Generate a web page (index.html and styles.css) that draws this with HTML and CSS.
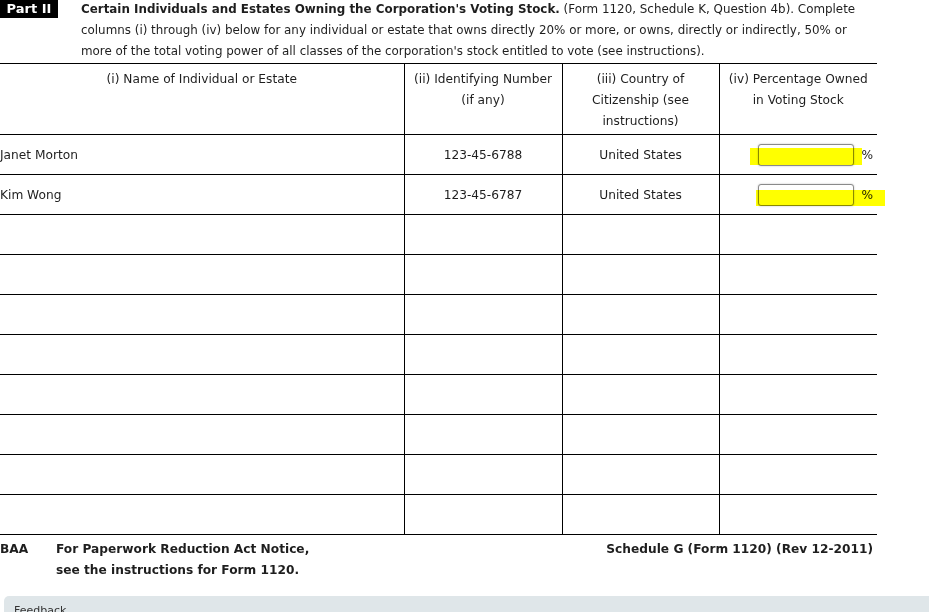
FILE: index.html
```html
<!DOCTYPE html>
<html>
<head>
<meta charset="utf-8">
<link rel="stylesheet" href="styles.css">
</head>
<body>
<div class="page">
  <div class="part-head">
    <div class="part-label">Part II</div>
    <p class="part-text"><b>Certain Individuals and Estates Owning the Corporation's Voting Stock.</b> (Form 1120, Schedule K, Question 4b). Complete<br>columns (i) through (iv) below for any individual or estate that owns directly 20% or more, or owns, directly or indirectly, 50% or<br>more of the total voting power of all classes of the corporation's stock entitled to vote (see instructions).</p>
  </div>
  <table class="grid">
    <colgroup>
      <col class="c1"><col class="c2"><col class="c3"><col class="c4">
    </colgroup>
    <thead>
      <tr class="hrow">
        <th>(i) Name of Individual or Estate</th>
        <th>(ii) Identifying Number<br>(if any)</th>
        <th>(iii) Country of<br>Citizenship (see<br>instructions)</th>
        <th>(iv) Percentage Owned<br>in Voting Stock</th>
      </tr>
    </thead>
    <tbody>
      <tr>
        <td class="name">Janet Morton</td>
        <td>123-45-6788</td>
        <td>United States</td>
        <td class="pct-cell"><div class="pct"><span class="mark mark1"></span><input class="pct-input" type="text"><span class="sign">%</span></div></td>
      </tr>
      <tr>
        <td class="name">Kim Wong</td>
        <td>123-45-6787</td>
        <td>United States</td>
        <td class="pct-cell"><div class="pct"><span class="mark mark2"></span><input class="pct-input" type="text"><span class="sign">%</span></div></td>
      </tr>
      <tr><td></td><td></td><td></td><td></td></tr>
      <tr><td></td><td></td><td></td><td></td></tr>
      <tr><td></td><td></td><td></td><td></td></tr>
      <tr><td></td><td></td><td></td><td></td></tr>
      <tr><td></td><td></td><td></td><td></td></tr>
      <tr><td></td><td></td><td></td><td></td></tr>
      <tr><td></td><td></td><td></td><td></td></tr>
      <tr><td></td><td></td><td></td><td></td></tr>
    </tbody>
  </table>
  <div class="foot">
    <div class="baa">BAA</div>
    <div class="notice">For Paperwork Reduction Act Notice,<br>see the instructions for Form 1120.</div>
    <div class="sched">Schedule G (Form 1120) (Rev 12-2011)</div>
  </div>
</div>
<div class="feedback"><span class="fb-text">Feedback</span></div>
</body>
</html>
```
FILE: styles.css
```css
html, body {
  margin: 0;
  padding: 0;
  background: #fff;
}
body {
  font-family: "DejaVu Sans", Verdana, sans-serif;
  font-size: 12.2px;
  color: #1e1e1e;
  width: 929px;
  height: 612px;
  overflow: hidden;
}
.page {
  width: 877px;
}
.part-head {
  display: flex;
  align-items: flex-start;
}
.part-label {
  background: #000;
  color: #fff;
  font-weight: bold;
  font-size: 13px;
  width: 58px;
  height: 18px;
  line-height: 18px;
  text-align: center;
  flex: none;
}
.part-text {
  margin: -1px 0 0 23px;
  line-height: 21px;
  flex: 1;
  font-size: 11.9px;
  white-space: nowrap;
}
.grid {
  border-collapse: collapse;
  table-layout: fixed;
  width: 877px;
  margin-top: 1px;
}
.c1 { width: 404px; }
.c2 { width: 158px; }
.c3 { width: 157px; }
.c4 { width: 158px; }
.grid th, .grid td {
  border-top: 1px solid #000;
  border-bottom: 1px solid #000;
  padding: 0;
  text-align: center;
}
.grid th + th, .grid td + td {
  border-left: 1px solid #000;
}
.grid th {
  font-weight: normal;
  vertical-align: top;
  line-height: 21px;
  height: 71px;
  padding-top: 5px;
  box-sizing: border-box;
}
.grid td {
  height: 39px;
  vertical-align: middle;
}
.grid td.name {
  text-align: left;
}
.pct-cell {
  text-align: left !important;
}
.pct {
  position: relative;
  display: flex;
  align-items: center;
  padding-left: 38px;
}
.pct-input {
  width: 96px;
  height: 22px;
  box-sizing: border-box;
  border: 1px solid #8a8a8a;
  border-radius: 3px;
  box-shadow: 0 0 2px rgba(0,0,0,0.25);
  background: #fff;
  margin: 0;
  padding: 0;
}
.sign {
  margin-left: 8px;
}
.mark {
  position: absolute;
  background: #ffff00;
  mix-blend-mode: multiply;
  z-index: 2;
  pointer-events: none;
}
.mark1 {
  left: 30px;
  top: 4px;
  width: 112px;
  height: 17px;
}
.mark2 {
  left: 36px;
  top: 6px;
  width: 129px;
  height: 16px;
}
.foot {
  display: flex;
  font-weight: bold;
  line-height: 21px;
  margin-top: 4px;
  padding-right: 4px;
}
.baa {
  width: 56px;
  flex: none;
}
.notice {
  flex: 1;
}
.sched {
  flex: none;
}
.feedback {
  margin: 15px 0 0 4px;
  height: 40px;
  background: #dfe6e9;
  border-top-left-radius: 5px;
  padding: 8px 0 0 10px;
  font-size: 11px;
  color: #333;
}
```
